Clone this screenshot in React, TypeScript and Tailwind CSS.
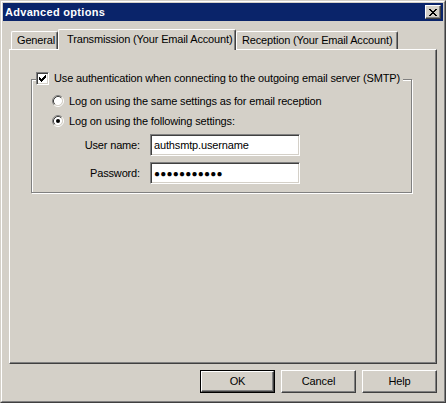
import type { ReactNode } from "react";

const face = "bg-[#d4d0c8]";

function CloseGlyph() {
  // 8x7 pixel cross, drawn row by row like the classic caption glyph
  const rows = ["XX....XX", ".XX..XX.", "..XXXX..", "...XX...", "..XXXX..", ".XX..XX.", "XX....XX"];
  return (
    <svg width="8" height="7" viewBox="0 0 8 7" shapeRendering="crispEdges">
      {rows.flatMap((r, y) =>
        r.split("").map((c, x) => (c === "X" ? <rect key={`${x}-${y}`} x={x} y={y} width="1" height="1" fill="#000" /> : null)),
      )}
    </svg>
  );
}

function CheckGlyph() {
  const rows = ["......X", ".....XX", "X...XXX", "XX.XXX.", "XXXXX..", ".XXX...", "..X...."];
  return (
    <svg width="7" height="7" viewBox="0 0 7 7" shapeRendering="crispEdges">
      {rows.flatMap((r, y) =>
        r.split("").map((c, x) => (c === "X" ? <rect key={`${x}-${y}`} x={x} y={y} width="1" height="1" fill="#000" /> : null)),
      )}
    </svg>
  );
}

function Radio({ checked }: { checked?: boolean }) {
  return (
    <svg width="12" height="12" viewBox="0 0 12 12" className="shrink-0">
      <circle cx="6" cy="6" r="4.2" fill="#fff" />
      <path d="M2.11 9.89 A5.5 5.5 0 0 1 9.89 2.11" fill="none" stroke="#808080" />
      <path d="M9.89 2.11 A5.5 5.5 0 0 1 2.11 9.89" fill="none" stroke="#fff" />
      <path d="M2.82 9.18 A4.5 4.5 0 0 1 9.18 2.82" fill="none" stroke="#404040" />
      <path d="M9.18 2.82 A4.5 4.5 0 0 1 2.82 9.18" fill="none" stroke="#d4d0c8" />
      {checked && <circle cx="6" cy="6" r="2" fill="#000" />}
    </svg>
  );
}

function Checkbox() {
  return (
    <div className="flex h-[13px] w-[13px] shrink-0 items-center justify-center border border-t-[#808080] border-l-[#808080] border-r-white border-b-white bg-white shadow-[inset_1px_1px_0_#404040,inset_-1px_-1px_0_#d4d0c8]">
      <CheckGlyph />
    </div>
  );
}

function Tab({ children, selected, className }: { children: ReactNode; selected?: boolean; className: string }) {
  return (
    <div
      className={
        selected
          ? `relative z-10 -mb-px flex h-[21px] items-center whitespace-nowrap rounded-t-[2px] border-t border-l border-r border-t-white border-l-white border-r-[#404040] pb-[2px] ${face} shadow-[inset_-1px_0_0_#808080] ${className}`
          : `flex h-[18px] items-center whitespace-nowrap rounded-t-[2px] border-t border-l border-r border-t-white border-l-white border-r-[#404040] ${face} shadow-[inset_-1px_0_0_#808080] ${className}`
      }
    >
      {children}
    </div>
  );
}

function Field({ label, children }: { label: string; children: ReactNode }) {
  return (
    <div className="flex items-center">
      <span className="w-[108px] text-right">{label}</span>
      <div className="ml-[10px] flex h-[22px] w-[150px] items-center whitespace-nowrap border border-t-[#808080] border-l-[#808080] border-r-white border-b-white bg-white pl-[3px] shadow-[inset_1px_1px_0_#404040,inset_-1px_-1px_0_#d4d0c8]">
        {children}
      </div>
    </div>
  );
}

function Button({ children, isDefault }: { children: ReactNode; isDefault?: boolean }) {
  return (
    <div className={`h-[23px] w-[75px] ${isDefault ? "border border-black" : ""}`}>
      <div className="flex h-full w-full items-center justify-center border border-t-white border-l-white border-r-[#404040] border-b-[#404040] shadow-[inset_-1px_-1px_0_#808080]">
        {children}
      </div>
    </div>
  );
}

export default function App() {
  return (
    <div className="h-[403px] w-[446px] border border-t-[#d4d0c8] border-l-[#d4d0c8] border-r-[#404040] border-b-[#404040] bg-[#d4d0c8] font-['Liberation_Sans',Arial,sans-serif] text-[11px] leading-[13px] tracking-[-0.15px] text-black">
      <div className="flex h-full flex-col border border-t-white border-l-white border-r-[#808080] border-b-[#808080] p-px">
        <div className="flex h-[18px] shrink-0 items-center justify-between bg-[#0a246a] pl-[2px] pr-[2px]">
          <span className="font-bold tracking-[0.3px] text-white">Advanced options</span>
          <div className="flex h-[14px] w-[16px] items-center justify-center border border-t-white border-l-white border-r-[#404040] border-b-[#404040] bg-[#d4d0c8] shadow-[inset_-1px_-1px_0_#808080]">
            <CloseGlyph />
          </div>
        </div>

        <div className="px-[6px]">
          <div className="mt-[8px] ml-[2px] flex items-end">
            <Tab className="w-[47px] pl-[5px]">General</Tab>
            <Tab selected className="w-[178px] pl-[8px]">
              Transmission (Your Email Account)
            </Tab>
            <Tab className="w-[162px] pl-[5px]">Reception (Your Email Account)</Tab>
          </div>

          <div className="h-[315px] border border-t-white border-l-white border-r-[#404040] border-b-[#404040] pt-[29px] pl-[21px] shadow-[inset_-1px_-1px_0_#808080]">
            <div className="relative h-[114px] w-[381px] border border-[#808080] shadow-[inset_1px_1px_0_#fff,1px_1px_0_#fff]">
              <div className={`absolute -top-[8px] left-[4px] flex items-center gap-[5px] whitespace-nowrap pr-[3px] ${face}`}>
                <Checkbox />
                <span>Use authentication when connecting to the outgoing email server (SMTP)</span>
              </div>

              <div className="ml-[20px] mt-[15px] flex flex-col gap-[8px] whitespace-nowrap">
                <label className="flex h-[12px] items-center gap-[5px]">
                  <Radio />
                  <span>Log on using the same settings as for email reception</span>
                </label>
                <label className="flex h-[12px] items-center gap-[5px]">
                  <Radio checked />
                  <span>Log on using the following settings:</span>
                </label>
              </div>

              <div className="mt-[7px] flex flex-col gap-[6px]">
                <Field label="User name:">authsmtp.username</Field>
                <Field label="Password:">
                  <span className="text-[10px] leading-[13px] tracking-[0.2px]">●●●●●●●●●●●</span>
                </Field>
              </div>
            </div>
          </div>

          <div className="mt-[6px] flex justify-end gap-[6px]">
            <Button isDefault>OK</Button>
            <Button>Cancel</Button>
            <Button>Help</Button>
          </div>
        </div>
      </div>
    </div>
  );
}
